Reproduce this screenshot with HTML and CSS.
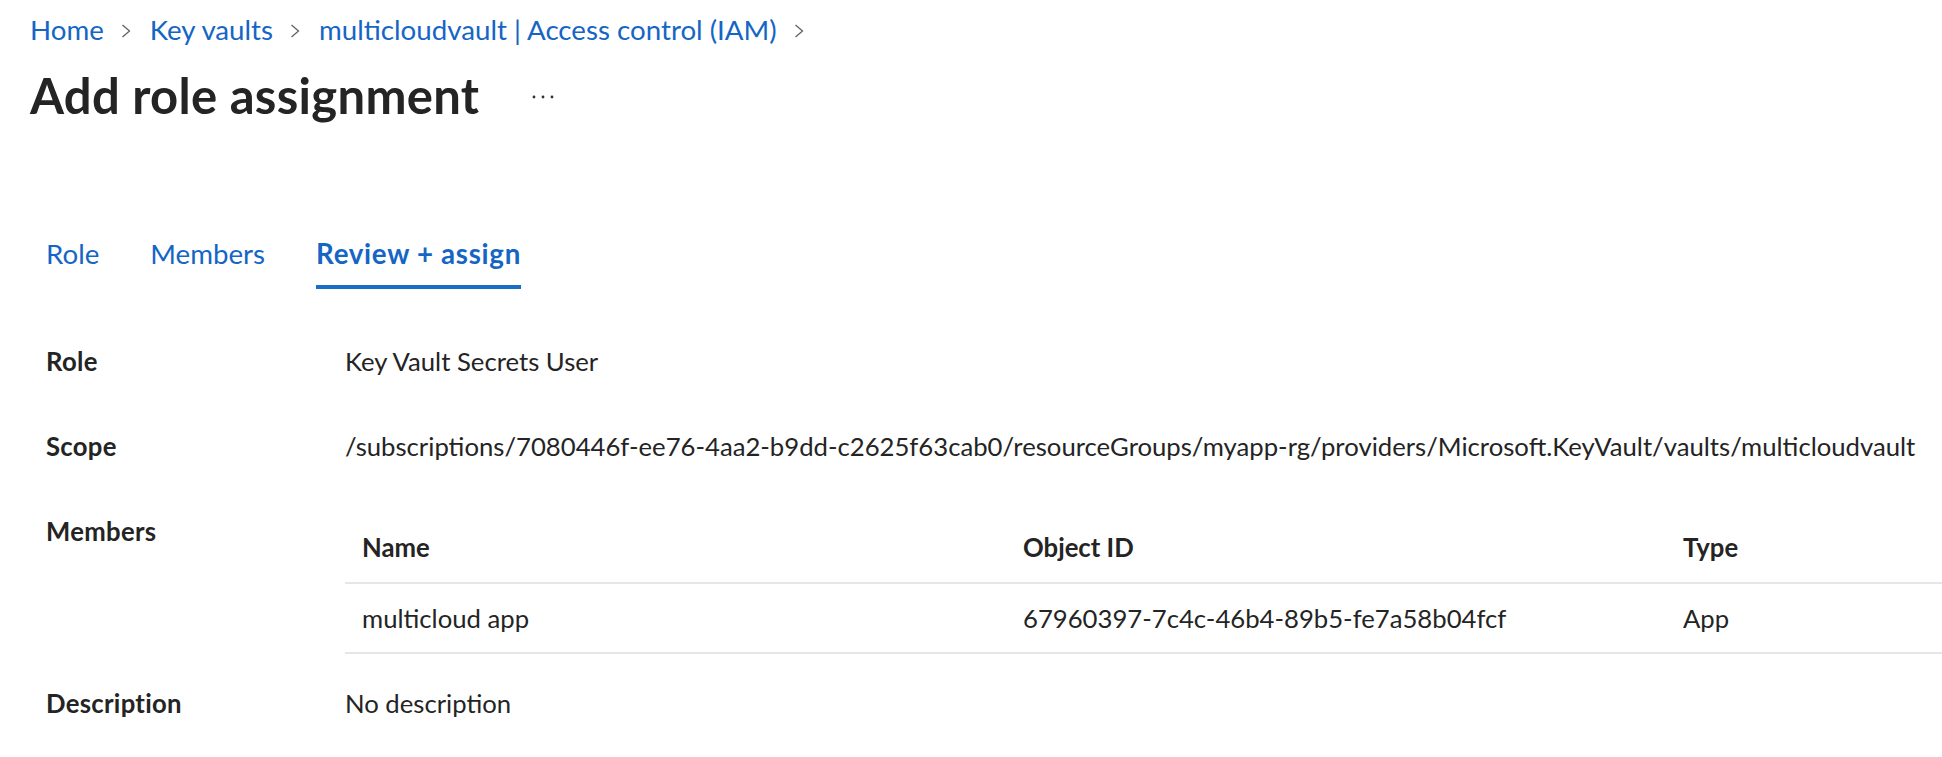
FILE: index.html
```html
<!DOCTYPE html>
<html lang="en">
<head>
<meta charset="utf-8">
<title>Add role assignment</title>
<link rel="stylesheet" href="styles.css">
</head>
<body>
<div class="page">
  <nav class="breadcrumb">
    <a class="crumb" href="#">Home</a>
    <span class="sep"><svg width="12" height="14" viewBox="0 0 12 14"><polyline points="2.5,1 9.5,7 2.5,13" fill="none" stroke="#616161" stroke-width="1.3"/></svg></span>
    <a class="crumb" href="#">Key vaults</a>
    <span class="sep"><svg width="12" height="14" viewBox="0 0 12 14"><polyline points="2.5,1 9.5,7 2.5,13" fill="none" stroke="#616161" stroke-width="1.3"/></svg></span>
    <a class="crumb" href="#">multicloudvault | Access control (IAM)</a>
    <span class="sep"><svg width="12" height="14" viewBox="0 0 12 14"><polyline points="2.5,1 9.5,7 2.5,13" fill="none" stroke="#616161" stroke-width="1.3"/></svg></span>
  </nav>

  <div class="title-row">
    <h1 class="title">Add role assignment</h1>
    <button class="more" aria-label="More"><svg width="24" height="6" viewBox="0 0 24 6"><circle cx="3" cy="3" r="1.4" fill="#323130"/><circle cx="12" cy="3" r="1.4" fill="#323130"/><circle cx="21" cy="3" r="1.4" fill="#323130"/></svg></button>
  </div>

  <div class="tabs">
    <a class="tab" href="#">Role</a>
    <a class="tab" href="#">Members</a>
    <a class="tab active" href="#">Review + assign</a>
  </div>

  <div class="details">
    <div class="label">Role</div>
    <div class="value">Key Vault Secrets User</div>

    <div class="label">Scope</div>
    <div class="value">/subscriptions/7080446f-ee76-4aa2-b9dd-c2625f63cab0/resourceGroups/myapp-rg/providers/Microsoft.KeyVault/vaults/multicloudvault</div>

    <div class="label">Members</div>
    <div class="value table-wrap">
      <table class="members">
        <thead>
          <tr><th class="c-name">Name</th><th class="c-id">Object ID</th><th class="c-type">Type</th></tr>
        </thead>
        <tbody>
          <tr><td>multicloud app</td><td>67960397-7c4c-46b4-89b5-fe7a58b04fcf</td><td>App</td></tr>
        </tbody>
      </table>
    </div>

    <div class="label desc">Description</div>
    <div class="value desc">No description</div>
  </div>
</div>
</body>
</html>
```
FILE: styles.css
```css
html, body {
  margin: 0;
  padding: 0;
  background: #ffffff;
}
body {
  font-family: "Lato", "Segoe UI", "Open Sans", sans-serif;
  color: #242424;
  overflow: hidden;
}
.page {
  padding: 12px 0 0 30px;
}

/* breadcrumb */
.breadcrumb {
  display: flex;
  align-items: center;
  font-size: 27.7px;
  line-height: 36px;
  height: 36px;
}
.crumb {
  color: #1566c4;
  text-decoration: none;
}
.sep {
  display: inline-flex;
  align-items: center;
  margin: 2px 18px 0 16px;
}

/* title */
.title-row {
  display: flex;
  align-items: center;
  margin-top: 19px;
  height: 56px;
}
.title {
  margin: 0;
  font-size: 49px;
  font-weight: 700;
  line-height: 56px;
  color: #242424;
  letter-spacing: 0.3px;
}
.more {
  border: 0;
  background: none;
  padding: 0;
  margin: 4px 0 0 52px;
  display: inline-flex;
}

/* tabs */
.tabs {
  display: flex;
  gap: 51px;
  margin: 113px 0 0 16px;
}
.tab {
  font-size: 27.7px;
  line-height: 36px;
  color: #1566c4;
  text-decoration: none;
  padding-bottom: 13px;
  border-bottom: 4px solid transparent;
}
.tab.active {
  font-weight: 700;
  letter-spacing: 0.7px;
  border-bottom-color: #1b6ec8;
}

/* details */
.details {
  display: grid;
  grid-template-columns: 299px 1fr;
  margin: 55px 0 0 16px;
  font-size: 25.7px;
  line-height: 34px;
  row-gap: 51px;
}
.label {
  font-weight: 700;
  color: #242424;
  letter-spacing: 0.3px;
}
.value {
  color: #242424;
  white-space: nowrap;
}
.table-wrap {
  line-height: 34px;
  letter-spacing: 0;
}
.members {
  width: 100%;
  border-collapse: collapse;
  font-size: 25.7px;
}
.members th {
  text-align: left;
  font-weight: 700;
  height: 69px;
  padding: 0 0 3px 17px;
  box-sizing: border-box;
  border-bottom: 2px solid #e6e6e6;
  vertical-align: middle;
}
.members td {
  height: 70px;
  padding: 0 0 0 17px;
  box-sizing: border-box;
  border-bottom: 2px solid #e6e6e6;
  vertical-align: middle;
}
.c-name { width: 661px; }
.c-id { width: 660px; }
.desc {
  margin-top: -19px;
}
```
